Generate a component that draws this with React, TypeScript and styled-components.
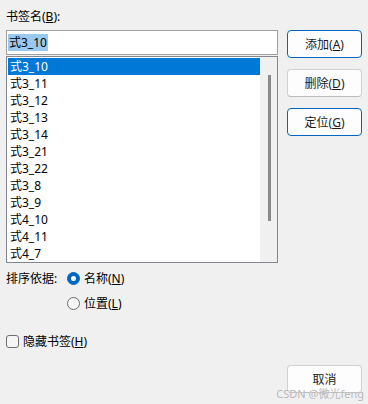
import React from "react";
import styled, { createGlobalStyle } from "styled-components";

const GlobalStyle = createGlobalStyle`
  html, body {
    margin: 0;
    padding: 0;
    background: #f0f0f0;
  }
  body {
    font-family: "Noto Sans", "Noto Sans CJK SC", sans-serif;
    font-size: 12px;
    color: #000;
  }
`;

const bookmarks = [
  "式3_10",
  "式3_11",
  "式3_12",
  "式3_13",
  "式3_14",
  "式3_21",
  "式3_22",
  "式3_8",
  "式3_9",
  "式4_10",
  "式4_11",
  "式4_7",
];

const Dialog = styled.div`
  position: relative;
  width: 368px;
  height: 404px;
  box-sizing: border-box;
  padding-left: 6px;
  background: #f0f0f0;
  overflow: hidden;
  line-height: 15px;
`;

const TopLabel = styled.div`
  height: 30px;
  box-sizing: border-box;
  padding-top: 9px;
`;

const Main = styled.div`
  display: grid;
  grid-template-columns: 272px 75px;
  column-gap: 9px;
  align-items: start;
`;

const LeftCol = styled.div`
  display: flex;
  flex-direction: column;
  gap: 1px;
`;

const NameInput = styled.div`
  height: 25px;
  box-sizing: border-box;
  border: 1px solid #a0a0a0;
  background: #fff;
  padding: 3px 0 0 1px;
`;

const Picked = styled.span`
  display: inline-block;
  height: 17px;
  line-height: 17px;
  padding: 0 1px;
  background: #99c9ef;
`;

const ListBox = styled.div`
  display: flex;
  height: 207px;
  box-sizing: border-box;
  border: 1px solid #828790;
  background: #fff;
`;

const Rows = styled.div`
  flex: 1;
  padding: 1px 0 0 1px;
`;

const Row = styled.div<{ $selected?: boolean }>`
  height: 17px;
  line-height: 17px;
  padding-left: 2px;
  background: ${(p) => (p.$selected ? "#0078d7" : "transparent")};
  color: ${(p) => (p.$selected ? "#fff" : "#000")};
`;

const ScrollTrack = styled.div`
  width: 17px;
  background: #f0f0f0;
  display: flex;
  justify-content: center;
  padding-top: 18px;
  box-sizing: border-box;
`;

const Thumb = styled.div`
  width: 3px;
  height: 146px;
  margin-left: 1px;
  background: #8a8a8a;
`;

const ButtonCol = styled.div`
  display: flex;
  flex-direction: column;
  gap: 11px;
`;

const DlgButton = styled.div<{ $accent?: boolean }>`
  height: 28px;
  box-sizing: border-box;
  display: flex;
  align-items: center;
  justify-content: center;
  border: 1px solid ${(p) => (p.$accent ? "#0067c0" : "#d0d0d0")};
  border-bottom-color: ${(p) => (p.$accent ? "#0067c0" : "#bcbcbc")};
  border-radius: 4px;
  background: #fdfdfd;
  color: #1a1a1a;
`;

const SortBlock = styled.div`
  display: grid;
  grid-template-columns: 60px auto;
  margin-top: 8px;
`;

const RadioList = styled.div`
  display: flex;
  flex-direction: column;
  gap: 10px;
`;

const Option = styled.div`
  display: flex;
  align-items: center;
  gap: 4px;
  height: 15px;
`;

const RadioDot = styled.span<{ $checked?: boolean }>`
  width: 13px;
  height: 13px;
  box-sizing: border-box;
  border-radius: 50%;
  margin-left: 1px;
  display: flex;
  align-items: center;
  justify-content: center;
  background: ${(p) => (p.$checked ? "#0067c0" : "#f6f6f6")};
  border: 1px solid ${(p) => (p.$checked ? "#0067c0" : "#6e6e6e")};
  &::after {
    content: "";
    width: 5px;
    height: 5px;
    border-radius: 50%;
    background: #fff;
    display: ${(p) => (p.$checked ? "block" : "none")};
  }
`;

const CheckRow = styled.div`
  display: flex;
  align-items: center;
  gap: 4px;
  height: 15px;
  margin-top: 23px;
`;

const CheckBox = styled.span`
  width: 13px;
  height: 13px;
  box-sizing: border-box;
  border: 1px solid #6e6e6e;
  border-radius: 3px;
  background: #f6f6f6;
`;

const Footer = styled.div`
  display: grid;
  grid-template-columns: 272px 75px;
  column-gap: 9px;
  margin-top: 16px;
`;

const Watermark = styled.div`
  position: absolute;
  right: 4px;
  bottom: 5px;
  font-size: 11px;
  line-height: 11px;
  color: #b4b4b4;
  text-shadow: 0 0 1px #fff;
  pointer-events: none;
`;

export default function App() {
  return (
    <>
      <GlobalStyle />
      <Dialog>
        <TopLabel>
          书签名(<u>B</u>):
        </TopLabel>
        <Main>
          <LeftCol>
            <NameInput>
              <Picked>式3_10</Picked>
            </NameInput>
            <ListBox>
              <Rows>
                {bookmarks.map((b, i) => (
                  <Row key={b} $selected={i === 0}>
                    {b}
                  </Row>
                ))}
              </Rows>
              <ScrollTrack>
                <Thumb />
              </ScrollTrack>
            </ListBox>
          </LeftCol>
          <ButtonCol>
            <DlgButton $accent>
              <span>
                添加(<u>A</u>)
              </span>
            </DlgButton>
            <DlgButton>
              <span>
                删除(<u>D</u>)
              </span>
            </DlgButton>
            <DlgButton $accent>
              <span>
                定位(<u>G</u>)
              </span>
            </DlgButton>
          </ButtonCol>
        </Main>
        <SortBlock>
          <span>排序依据:</span>
          <RadioList>
            <Option>
              <RadioDot $checked />
              <span>
                名称(<u>N</u>)
              </span>
            </Option>
            <Option>
              <RadioDot />
              <span>
                位置(<u>L</u>)
              </span>
            </Option>
          </RadioList>
        </SortBlock>
        <CheckRow>
          <CheckBox />
          <span>
            隐藏书签(<u>H</u>)
          </span>
        </CheckRow>
        <Footer>
          <span />
          <DlgButton>
            <span>取消</span>
          </DlgButton>
        </Footer>
        <Watermark>CSDN @微光feng</Watermark>
      </Dialog>
    </>
  );
}
